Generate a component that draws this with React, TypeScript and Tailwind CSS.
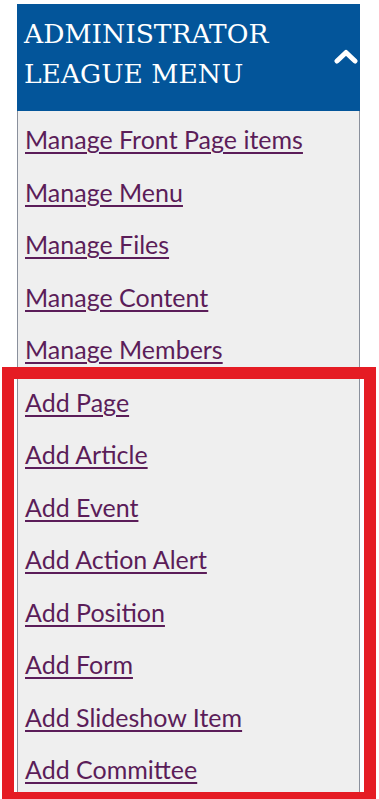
import React from "react";

const links = [
  "Manage Front Page items",
  "Manage Menu",
  "Manage Files",
  "Manage Content",
  "Manage Members",
  "Add Page",
  "Add Article",
  "Add Event",
  "Add Action Alert",
  "Add Position",
  "Add Form",
  "Add Slideshow Item",
  "Add Committee",
];

export default function App() {
  return (
    <div className="relative min-h-[799px] bg-white pt-[4px] pl-[17px]">
      <div className="w-[343px]">
        <div className="flex items-start justify-between bg-[#03559a] h-[107px] pl-[7px] pr-[2px] pt-[10px]">
          <h2
            className="text-white text-[26.5px] leading-[40px]"
            style={{ fontFamily: '"DejaVu Serif", "Liberation Serif", serif' }}
          >
            ADMINISTRATOR
            <br />
            LEAGUE MENU
          </h2>
          <svg
            width="24"
            height="18"
            viewBox="0 0 24 18"
            className="mt-[33px]"
            aria-hidden="true"
          >
            <path
              d="M3 14 L12 5.5 L21 14"
              fill="none"
              stroke="white"
              strokeWidth="5"
              strokeLinecap="round"
              strokeLinejoin="round"
            />
          </svg>
        </div>
        <ul
          className="bg-[#efefef] border-x border-[#8a909c] pt-[2px] pl-[7px]"
          style={{ fontFamily: 'Lato, "Liberation Sans", sans-serif' }}
        >
          {links.map((l) => (
            <li key={l} className="h-[52.5px] leading-[52.5px]">
              <a
                href="#"
                className="text-[25px] text-[#5b1d59] underline decoration-2 underline-offset-[3px]"
              >
                {l}
              </a>
            </li>
          ))}
        </ul>
      </div>
      <div className="pointer-events-none absolute left-[2px] top-[367px] w-[374px] h-[437px] border-[12px] border-[#e51c24]" />
    </div>
  );
}
